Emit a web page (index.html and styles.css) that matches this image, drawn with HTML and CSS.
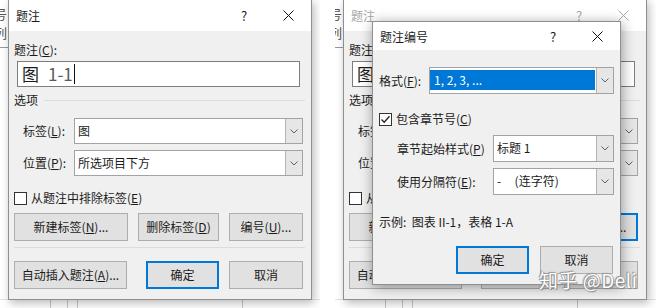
FILE: index.html
```html
<!DOCTYPE html>
<html lang="zh-CN">
  <head>
    <meta charset="UTF-8" />
    <link rel="stylesheet" href="styles.css">
    <title>题注</title>
  </head>
  <body>
    <!-- left shot: caption dialog -->
    <div class="shot">
      <div class="doc">
        <p>号</p>
        <p>列</p>
        <hr />
      </div>
      <div class="docfoot"><i class="c1"></i><i class="c2"></i><i class="c3"></i><i class="c4"></i></div>

      <div class="dlg caption">
        <div class="titlebar">
          <span class="title">题注</span>
          <span class="help">?</span>
          <span class="close"><svg width="11" height="11" viewBox="0 0 11 11"><path d="M0.5 0.5L10.5 10.5M10.5 0.5L0.5 10.5" /></svg></span>
        </div>
        <div class="body">
          <div class="lbl">题注(<u>C</u>):</div>
          <div class="textbox"><span class="pre">图</span><span class="num">1-1</span><span class="caret"></span></div>
          <div class="group"><span>选项</span><i></i></div>
          <div class="field first">
            <label>标签(<u>L</u>):</label>
            <div class="combo"><span>图</span><b class="drop"><svg width="8" height="5" viewBox="0 0 8 5"><path d="M0.5 0.5L4 4L7.5 0.5" /></svg></b></div>
          </div>
          <div class="field">
            <label>位置(<u>P</u>):</label>
            <div class="combo"><span>所选项目下方</span><b class="drop"><svg width="8" height="5" viewBox="0 0 8 5"><path d="M0.5 0.5L4 4L7.5 0.5" /></svg></b></div>
          </div>
          <div class="check"><span class="box"></span><span>从题注中排除标签(<u>E</u>)</span></div>
          <div class="btnrow">
            <span class="btn w114">新建标签(<u>N</u>)...</span>
            <span class="btn w81">删除标签(<u>D</u>)</span>
            <span class="btn w74">编号(<u>U</u>)...</span>
          </div>
          <div class="sep"></div>
          <div class="btnrow last">
            <span class="btn w113">自动插入题注(<u>A</u>)...</span>
            <span class="btn w73 def push">确定</span>
            <span class="btn w74">取消</span>
          </div>
        </div>
      </div>
    </div>

    <!-- right shot: numbering dialog over the inactive caption dialog -->
    <div class="shot">
      <div class="doc">
        <p>号</p>
        <p>列</p>
        <hr />
      </div>
      <div class="docfoot"><i class="c1"></i><i class="c2"></i><i class="c3"></i><i class="c4"></i></div>

      <div class="dlg caption inactive">
        <div class="titlebar">
          <span class="title">题注</span>
          <span class="help">?</span>
          <span class="close"><svg width="11" height="11" viewBox="0 0 11 11"><path d="M0.5 0.5L10.5 10.5M10.5 0.5L0.5 10.5" /></svg></span>
        </div>
        <div class="body">
          <div class="lbl">题注(<u>C</u>):</div>
          <div class="textbox"><span class="pre">图</span><span class="num">1-1</span></div>
          <div class="group"><span>选项</span><i></i></div>
          <div class="field first">
            <label>标签(<u>L</u>):</label>
            <div class="combo"><span>图</span><b class="drop"><svg width="8" height="5" viewBox="0 0 8 5"><path d="M0.5 0.5L4 4L7.5 0.5" /></svg></b></div>
          </div>
          <div class="field">
            <label>位置(<u>P</u>):</label>
            <div class="combo"><span>所选项目下方</span><b class="drop"><svg width="8" height="5" viewBox="0 0 8 5"><path d="M0.5 0.5L4 4L7.5 0.5" /></svg></b></div>
          </div>
          <div class="check"><span class="box"></span><span>从题注中排除标签(<u>E</u>)</span></div>
          <div class="btnrow">
            <span class="btn w114">新建标签(<u>N</u>)...</span>
            <span class="btn w81">删除标签(<u>D</u>)</span>
            <span class="btn w74 def">编号(<u>U</u>)...</span>
          </div>
          <div class="sep"></div>
          <div class="btnrow last">
            <span class="btn w113">自动插入题注(<u>A</u>)...</span>
            <span class="btn w73 push">确定</span>
            <span class="btn w74">取消</span>
          </div>
        </div>
      </div>

      <div class="dlg numbering">
        <div class="titlebar">
          <span class="title">题注编号</span>
          <span class="help">?</span>
          <span class="close"><svg width="11" height="11" viewBox="0 0 11 11"><path d="M0.5 0.5L10.5 10.5M10.5 0.5L0.5 10.5" /></svg></span>
        </div>
        <div class="body">
          <div class="field">
            <label class="short">格式(<u>F</u>):</label>
            <div class="combo sel wide"><span>1, 2, 3, ...</span><b class="drop"><svg width="8" height="5" viewBox="0 0 8 5"><path d="M0.5 0.5L4 4L7.5 0.5" /></svg></b></div>
          </div>
          <div class="check on"><span class="box"><svg width="11" height="11" viewBox="0 0 11 11"><path d="M1.5 5.5L4.2 8.3L9.5 2.2" /></svg></span><span>包含章节号(<u>C</u>)</span></div>
          <div class="field sub">
            <label class="long">章节起始样式(<u>P</u>)</label>
            <div class="combo narrow"><span>标题 1</span><b class="drop"><svg width="8" height="5" viewBox="0 0 8 5"><path d="M0.5 0.5L4 4L7.5 0.5" /></svg></b></div>
          </div>
          <div class="field">
            <label class="long">使用分隔符(<u>E</u>):</label>
            <div class="combo narrow"><span>-&nbsp;&nbsp;&nbsp;&nbsp;&nbsp;(连字符)</span><b class="drop"><svg width="8" height="5" viewBox="0 0 8 5"><path d="M0.5 0.5L4 4L7.5 0.5" /></svg></b></div>
          </div>
          <div class="example">示例:&nbsp; 图表 II-1，表格 1-A</div>
          <div class="btnrow end">
            <span class="btn w73 def">确定</span>
            <span class="btn w73">取消</span>
          </div>
        </div>
      </div>

      <div class="mark">知乎 @Deli</div>
    </div>
  </body>
</html>
```

FILE: styles.css
```css
* {
  margin: 0;
  padding: 0;
  box-sizing: border-box;
}
body {
  display: flex;
  width: 656px;
  height: 308px;
  overflow: hidden;
  background: #fff;
  font-family: "Noto Sans CJK SC", "Noto Sans", sans-serif;
  font-size: 12px;
  color: #1b1b1b;
}
u {
  text-decoration: underline;
  text-underline-offset: 1px;
}

/* one screenshot */
.shot {
  position: relative;
  display: flex;
  flex-direction: column;
  flex: none;
  width: 320px;
  height: 308px;
  overflow: hidden;
}
.shot + .shot {
  width: 321px;
  margin-left: 15px;
}

/* word document behind the dialogs */
.doc {
  width: 9px;
  padding-top: 4px;
  overflow: hidden;
  color: #555;
}
.doc p {
  margin-left: -6px;
  font-size: 13px;
  line-height: 19px;
  white-space: nowrap;
}
.doc hr {
  margin-top: 5px;
  border: none;
  height: 1px;
  background: #999;
}
.docfoot {
  position: relative;
  margin-top: auto;
  height: 9px;
  border-top: 1px solid #e4e4e4;
}
.docfoot i {
  position: absolute;
  top: 0;
  bottom: 0;
  width: 1px;
  background: #c8c8c8;
}
.docfoot .c1 { left: 50px; }
.docfoot .c2 { left: 67px; }
.docfoot .c3 { left: 77px; }
.docfoot .c4 { left: 242px; }

/* dialog windows */
.dlg {
  position: absolute;
  background: #f0f0f0;
  border: 1px solid #8f8f8f;
  box-shadow: 2px 3px 9px rgba(0, 0, 0, 0.28);
}
.caption {
  left: 8px;
  top: -1px;
  width: 304px;
}
.numbering {
  left: 37px;
  top: 21px;
  width: 249px;
  box-shadow: 1px 2px 12px rgba(0, 0, 0, 0.38);
}
.titlebar {
  display: flex;
  align-items: center;
  height: 31px;
  background: #fff;
}
.numbering .titlebar {
  height: 28px;
}
.title {
  flex: 1;
  padding-left: 7px;
}
.help {
  width: 42px;
  text-align: center;
  font-size: 13px;
}
.close {
  display: flex;
  justify-content: center;
  width: 46px;
}
.close svg path {
  stroke: #111;
  stroke-width: 1;
  fill: none;
}
.inactive .title,
.inactive .help {
  color: #a6a6a6;
}
.inactive .close svg path {
  stroke: #a6a6a6;
}

.body {
  padding: 11px 6px 10px 5px;
  line-height: 16px;
}
.numbering .body {
  padding-left: 6px;
}

.textbox {
  display: flex;
  align-items: center;
  width: 283px;
  height: 26px;
  margin: 3px 0 0 3px;
  padding-left: 4px;
  border: 1px solid #7d7d7d;
  background: #fff;
  font-size: 17px;
}
.textbox .num {
  margin-left: 9px;
  color: #5a5a5a;
}
.caret {
  width: 1px;
  height: 20px;
  margin-left: 1px;
  background: #111;
}

.group {
  display: flex;
  align-items: center;
  gap: 6px;
  margin-top: 5px;
}
.group i {
  flex: 1;
  height: 1px;
  background: #dcdcdc;
}

.field {
  display: flex;
  align-items: center;
  margin-top: 6px;
}
.field.first {
  margin-top: 10px;
}
.field label {
  width: 60px;
  padding-left: 9px;
}
.field label.short {
  width: 50px;
  padding-left: 0;
}
.field label.long {
  width: 114px;
  padding-left: 18px;
}
.numbering .field {
  margin-top: 6px;
}
.numbering .field.sub {
  margin-top: 8px;
}

.combo {
  display: flex;
  width: 229px;
  height: 26px;
  border: 1px solid #a3a3a3;
  background: #fff;
}
.numbering .combo {
  height: 27px;
}
.combo.wide {
  width: 185px;
}
.combo.narrow {
  width: 121px;
}
.combo span {
  flex: 1;
  padding-left: 3px;
  line-height: 24px;
  white-space: nowrap;
}
.combo.sel span {
  margin: 2px 1px 3px 0;
  padding-left: 4px;
  line-height: 20px;
  background: #0078d7;
  color: #fff;
}
.drop {
  display: flex;
  align-items: center;
  justify-content: center;
  width: 17px;
  border-left: 1px solid #b4b4b4;
  background: #e6e6e6;
}
.drop svg path {
  stroke: #606060;
  fill: none;
}

.check {
  display: flex;
  align-items: center;
  gap: 4px;
  margin-top: 14px;
}
.numbering .check {
  margin-top: 17px;
}
.box {
  display: flex;
  width: 13px;
  height: 13px;
  border: 1px solid #333;
  background: #fff;
}
.box svg path {
  stroke: #222;
  stroke-width: 1.3;
  fill: none;
}

.btnrow {
  display: flex;
  gap: 10px;
  margin-top: 7px;
}
.btnrow.last {
  margin-top: 13px;
}
.btnrow.end {
  justify-content: flex-end;
  gap: 11px;
  margin-top: 16px;
  margin-right: 1px;
}
.btn {
  display: flex;
  align-items: center;
  justify-content: center;
  height: 28px;
  border: 1px solid #adadad;
  background: #e1e1e1;
  white-space: nowrap;
}
.btn.def {
  border: 2px solid #0078d7;
}
.btn.push {
  margin-left: 9px;
}
.w113 { width: 113px; }
.w114 { width: 114px; }
.w81 { width: 81px; }
.w74 { width: 74px; }
.w73 { width: 73px; }

.sep {
  height: 1px;
  margin-top: 6px;
  background: #dcdcdc;
}

.example {
  margin-top: 19px;
}

/* site watermark */
.mark {
  position: absolute;
  left: 204px;
  top: 266px;
  font-size: 19px;
  color: #fff;
  letter-spacing: 0.5px;
  text-shadow: 0 0 1px #777, 1px 1px 1px #888, -1px -1px 1px #999;
}
```
